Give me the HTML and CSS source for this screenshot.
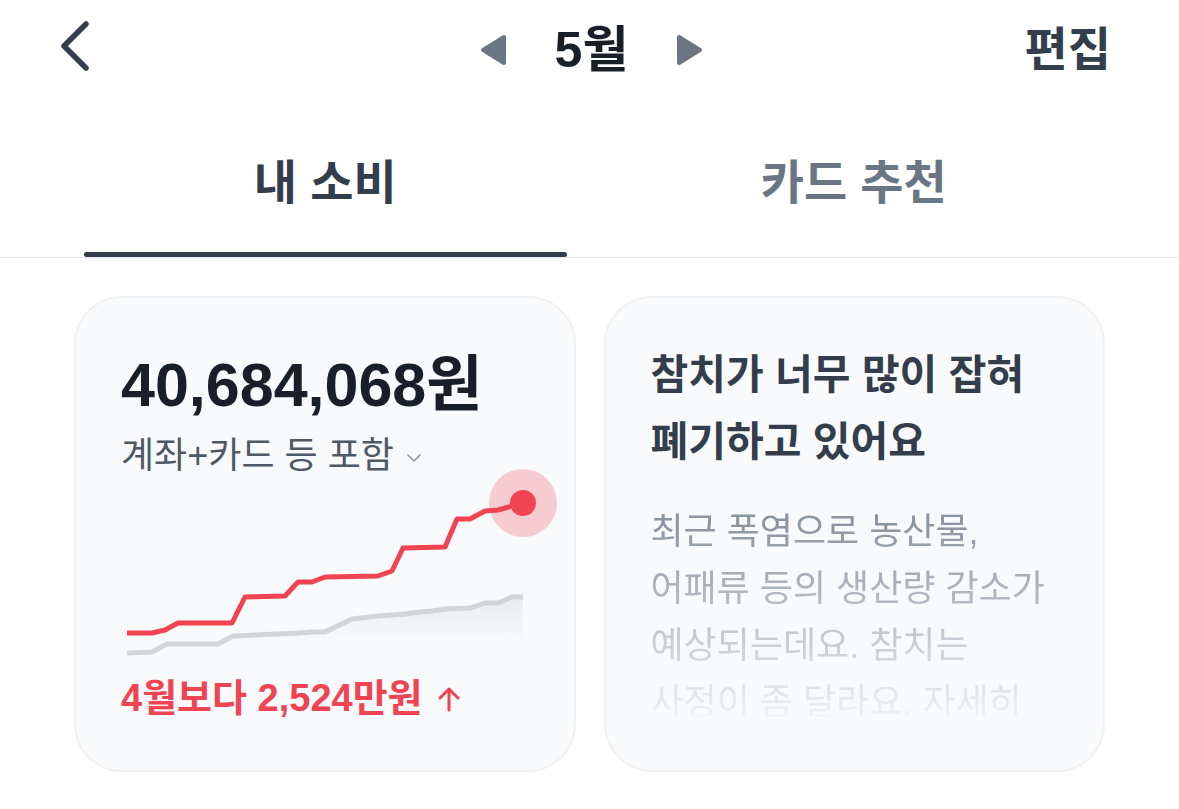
FILE: index.html
```html
<!DOCTYPE html>
<html lang="ko">

<head>
	<meta charset="UTF-8">
	<meta name="viewport" content="width=device-width, initial-scale=1">
	<title>내 소비</title>
	<link rel="stylesheet" href="styles.css">
</head>

<body>
	<header class="top-bar">
		<button class="back-button" aria-label="뒤로">
			<svg width="30" height="52" viewBox="0 0 30 52">
				<path d="M26 4 L4 26 L26 48" fill="none" stroke="#333d4b" stroke-width="5.5" stroke-linecap="round" stroke-linejoin="round"/>
			</svg>
		</button>
		<div class="month-picker">
			<button class="month-arrow" aria-label="이전 달">
				<svg width="28" height="32" viewBox="0 0 28 32">
					<path d="M3 16 L24 3 L24 29 Z" fill="#6b7684" stroke="#6b7684" stroke-width="4" stroke-linejoin="round"/>
				</svg>
			</button>
			<span class="month-label">5월</span>
			<button class="month-arrow" aria-label="다음 달">
				<svg width="28" height="32" viewBox="0 0 28 32">
					<path d="M25 16 L4 3 L4 29 Z" fill="#6b7684" stroke="#6b7684" stroke-width="4" stroke-linejoin="round"/>
				</svg>
			</button>
		</div>
		<button class="edit-button">편집</button>
	</header>

	<nav class="tabs">
		<div class="tab tab-active">
			<span class="tab-label">내 소비</span>
			<span class="tab-bar"></span>
		</div>
		<div class="tab">
			<span class="tab-label">카드 추천</span>
			<span class="tab-bar"></span>
		</div>
	</nav>

	<main class="cards">
		<section class="card spend-card">
			<p class="spend-total">40,684,068원</p>
			<p class="spend-scope">계좌+카드 등 포함
				<svg class="scope-chevron" width="16" height="10" viewBox="0 0 16 10">
					<path d="M2 2 L8 8 L14 2" fill="none" stroke="#8b95a1" stroke-width="1.6" stroke-linecap="round" stroke-linejoin="round"/>
				</svg>
			</p>
			<svg class="spend-chart" width="440" height="192" viewBox="0 0 440 192">
				<defs>
					<linearGradient id="lastMonthFill" x1="0" y1="0" x2="0" y2="1">
						<stop offset="0" stop-color="#e9ecef"/>
						<stop offset="1" stop-color="#f9fafb"/>
					</linearGradient>
				</defs>
				<!-- last month -->
				<polygon points="112,170 179,167 191,166 204,166 231,153 257,150 284,148 299,146 312,145 324,143 349,142 364,137 377,137 391,131 402,131 402,178 112,178" fill="url(#lastMonthFill)"/>
				<polyline points="6,187 31,186 46,178 97,178 112,170 179,167 191,166 204,166 231,153 257,150 284,148 299,146 312,145 324,143 349,142 364,137 377,137 391,131 402,131" fill="none" stroke="#d1d6db" stroke-width="5" stroke-linejoin="round"/>
				<!-- this month -->
				<polyline points="6,167 31,167 44,164 57,157 111,157 124,131 164,130 177,116 191,116 204,111 257,110 271,105 282,82 324,81 336,53 349,53 364,45 377,44 391,40 402,37" fill="none" stroke="#f04452" stroke-width="5" stroke-linejoin="round"/>
				<circle cx="402" cy="37" r="34" fill="#f04452" fill-opacity="0.25"/>
				<circle cx="402" cy="37" r="13" fill="#f04452"/>
			</svg>
			<p class="spend-diff">4월보다 2,524만원
				<svg class="diff-arrow" width="24" height="26" viewBox="0 0 24 26" aria-label="증가">
					<path d="M12 24 L12 3 M3 12 L12 3 L21 12" fill="none" stroke="#f04452" stroke-width="3" stroke-linecap="round" stroke-linejoin="round"/>
				</svg>
			</p>
		</section>

		<section class="card news-card">
			<h2 class="news-title">참치가 너무 많이 잡혀<br>폐기하고 있어요</h2>
			<p class="news-body">최근 폭염으로 농산물,<br>어패류 등의 생산량 감소가<br>예상되는데요. 참치는<br>사정이 좀 달라요. 자세히</p>
		</section>
	</main>
</body>

</html>
```

FILE: styles.css
```css
* {
	box-sizing: border-box;
}

body {
	margin: 0;
	background-color: #ffffff;
	font-family: "Liberation Sans", "Noto Sans CJK KR", sans-serif;
	color: #333d4b;
}

button {
	font: inherit;
	color: inherit;
	background: none;
	border: none;
	padding: 0;
	cursor: pointer;
}

p,
h2 {
	margin: 0;
}

/* top bar */
.top-bar {
	display: grid;
	grid-template-columns: 1fr auto 1fr;
	align-items: center;
	height: 100px;
	padding: 0 68px;
}

.back-button {
	justify-self: start;
	display: flex;
	margin: 0 0 8px -8px;
}

.month-picker {
	display: flex;
	align-items: center;
	gap: 47px;
	padding-left: 4px;
}

.month-arrow {
	display: flex;
}

.month-label {
	font-size: 50px;
	font-weight: 700;
	line-height: 58px;
	color: #191f28;
}

.edit-button {
	justify-self: end;
	font-size: 47px;
	font-weight: 700;
	line-height: 58px;
	color: #333d4b;
}

/* tabs */
.tabs {
	display: grid;
	grid-template-columns: 1fr 1fr;
	gap: 46px;
	padding: 0 84px;
	border-bottom: 1px solid #e5e8eb;
}

.tab {
	display: flex;
	flex-direction: column;
	align-items: center;
	padding-top: 53px;
	font-size: 47px;
	font-weight: 600;
	line-height: 60px;
	color: #6b7684;
}

.tab-label {
	margin-bottom: 39px;
}

.tab-bar {
	align-self: stretch;
	height: 5px;
	border-radius: 3px;
}

.tab-active {
	font-weight: 700;
	color: #333d4b;
}

.tab-active .tab-bar {
	background-color: #333d4b;
}

/* cards */
.cards {
	display: grid;
	grid-template-columns: 1fr 1fr;
	gap: 28px;
	padding: 38px 74px 0;
}

.card {
	height: 476px;
	padding: 0 45px;
	border: 2px solid #eff1f3;
	border-radius: 48px;
	background-color: #f9fafb;
	overflow: hidden;
}

.spend-card {
	padding-top: 53px;
}

.spend-total {
	font-size: 61px;
	font-weight: 700;
	line-height: 68px;
	color: #191f28;
}

.spend-scope {
	display: flex;
	align-items: center;
	gap: 12px;
	margin-top: 15px;
	font-size: 36px;
	line-height: 44px;
	color: #4e5968;
}

.scope-chevron {
	margin-top: 4px;
}

.spend-chart {
	display: block;
	margin-top: -12px;
}

.spend-diff {
	display: flex;
	align-items: center;
	gap: 14px;
	margin-top: 18px;
	font-size: 38px;
	font-weight: 600;
	line-height: 44px;
	color: #f04452;
}

.diff-arrow {
	margin-top: 2px;
}

.news-card {
	padding-top: 44px;
}

.news-title {
	font-size: 41px;
	font-weight: 700;
	line-height: 67px;
	color: #333d4b;
}

.news-body {
	max-height: 213px;
	margin-top: 27px;
	overflow: hidden;
	font-size: 36px;
	line-height: 57px;
	color: #8b95a1;
	-webkit-mask-image: linear-gradient(to bottom, #000 10%, rgba(0, 0, 0, 0.08) 100%);
	mask-image: linear-gradient(to bottom, #000 10%, rgba(0, 0, 0, 0.08) 100%);
}
```
